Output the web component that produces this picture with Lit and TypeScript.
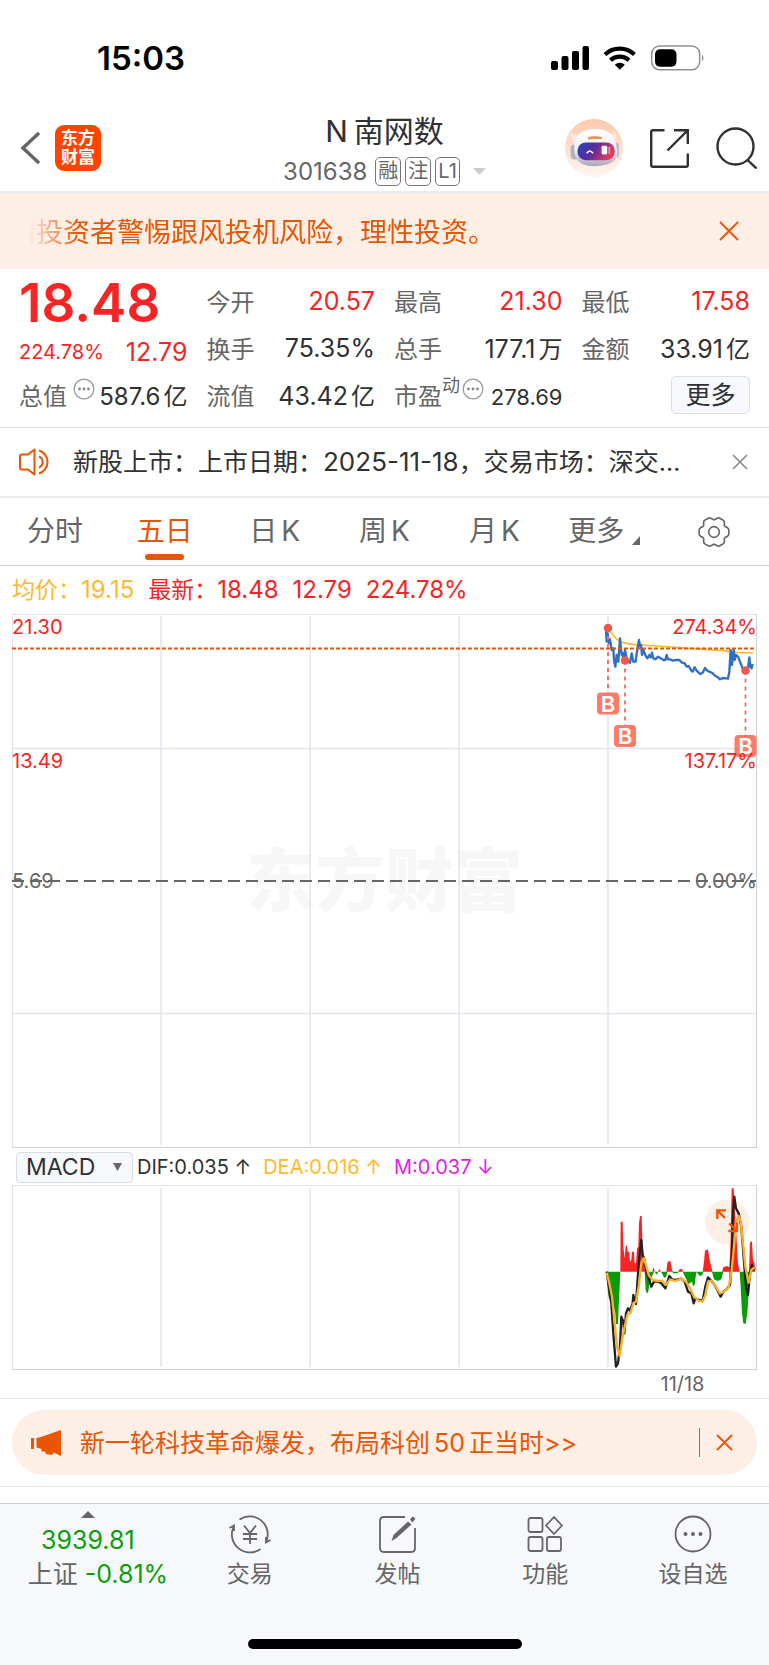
import { LitElement, html, svg, css } from "lit";
import { customElement, property } from "lit/decorators.js";

const base = css`
  :host { display: block; }
  * { box-sizing: border-box; }
  svg { display: block; }
  button, select { font: inherit; color: inherit; background: none; border: 0; padding: 0; margin: 0; cursor: pointer; }
`;

/** Outline of a six-lobed gear. */
function gearPath(): string {
  const pts: string[] = [];
  for (let i = 0; i < 96; i++) {
    const a = (i / 96) * Math.PI * 2;
    const r = 42 + 4 * Math.cos(6 * a) - 1.5 * Math.cos(12 * a);
    pts.push(`${(48 + r * Math.cos(a)).toFixed(1)},${(48 + r * Math.sin(a)).toFixed(1)}`);
  }
  return `M${pts.join("L")}Z`;
}

@customElement("status-bar")
class StatusBar extends LitElement {
  static styles = [base, css`
    .bar { display: flex; justify-content: space-between; align-items: center; padding: 38px 64px 0 97px; height: 78px; }
    .time { font-size: 33px; font-weight: 600; line-height: 40px; color: #000; }
  `];
  render() {
    return html`<div class="bar">
      <span class="time">15:03</span>
      <svg width="154" height="26" viewBox="0 0 154 26">
        <rect x="0" y="16" width="7" height="9" rx="2"/><rect x="10.500" y="11" width="7" height="14" rx="2"/>
        <rect x="21" y="6" width="7" height="19" rx="2"/><rect x="31.500" y="1" width="6.500" height="24" rx="2"/>
        <g fill="none" stroke="#000" stroke-width="4.200"><path d="M54 9.500a21.500 21.500 0 0 1 29.500 0"/><path d="M59.500 15.300a13.600 13.600 0 0 1 18.500 0"/></g>
        <path d="M68.800 24.800l-5-5a7.200 7.200 0 0 1 10 0z"/>
        <rect x="100.700" y="1" width="48" height="23.800" rx="8" fill="none" stroke="#8f8f8f" stroke-width="1.500"/>
        <rect x="104" y="4.200" width="21.500" height="17.600" rx="5"/><path d="M151 9.500q3 3.500 0 7z" fill="#8f8f8f"/>
      </svg></div>`;
  }
}

@customElement("stock-header")
class StockHeader extends LitElement {
  static styles = [base, css`
    .head { display: grid; grid-template-columns: minmax(0, 1fr) auto minmax(0, 1fr); align-items: center; padding: 31px 12px 5px; border-bottom: 2px solid #ebebed; }
    .left { display: flex; align-items: center; gap: 14px; margin-left: 8px; }
    .logo { display: grid; place-content: center; width: 46px; height: 46px; border-radius: 9px; background: #ff4400; color: #fff; font-size: 17px; line-height: 19px; font-weight: 700; text-align: center; text-decoration: none; }
    .logo span { display: block; }
    .mid { text-align: center; }
    h1 { margin: 0 0 4px; font-size: 30px; font-weight: 400; line-height: 44px; color: #2f3133; }
    h1 span { margin-left: 6px; }
    .sub { display: flex; align-items: center; justify-content: center; gap: 4px; font-size: 24px; line-height: 29px; color: #666; }
    .code { margin-right: 4px; }
    .tag { border: 1px solid #777; border-radius: 5px; height: 29px; line-height: 27px; padding: 0 2px; font-size: 20px; }
    .caret { margin-left: 9px; }
    .right { display: flex; align-items: center; justify-content: flex-end; gap: 26px; }
  `];
  render() {
    return html`<header class="head">
      <div class="left">
        <button aria-label="返回"><svg width="21" height="34" viewBox="0 0 21 34"><path d="M19 2L3 17l16 15" fill="none" stroke="#666" stroke-width="3.500"/></svg></button>
        <a class="logo" href="#"><span>东方</span><span>财富</span></a>
      </div>
      <div class="mid">
        <h1>N<span>南网数</span></h1>
        <div class="sub"><span class="code">301638</span><span class="tag">融</span><span class="tag">注</span><span class="tag">L1</span>
          <svg class="caret" width="13" height="8" viewBox="0 0 13 8"><path d="M0 0h13L6.500 7z" fill="#ccc"/></svg></div>
      </div>
      <div class="right">
        <button aria-label="智能助手"><svg width="58" height="58" viewBox="539 295 176 176">
          <defs>
            <linearGradient id="halo" x2="0" y2="1"><stop offset="0" stop-color="#fdc8ae"/><stop offset="1" stop-color="#fff6f1"/></linearGradient>
            <linearGradient id="visor" x2="1" y2=".3"><stop offset="0" stop-color="#2746b8"/><stop offset=".5" stop-color="#5a2c9c"/><stop offset="1" stop-color="#e23b5c"/></linearGradient>
            <linearGradient id="shell" x2="0" y2="1"><stop offset="0" stop-color="#fff"/><stop offset=".6" stop-color="#f0ecef"/><stop offset="1" stop-color="#a9a4b8"/></linearGradient>
          </defs>
          <circle cx="627" cy="383" r="88" fill="url(#halo)"/>
          <path d="M558 333q6 12 22 12l-8 26q-20-12-14-38zM690 331q-4 12-16 14l6 24q22-12 10-38z" fill="#f3e9e6"/>
          <rect x="556" y="372" width="26" height="46" rx="12" fill="#b5b0bd"/><rect x="683" y="366" width="20" height="46" rx="10" fill="#c3bbc6"/>
          <path d="M567 385q0-60 62-60t66 56q6 20-2 36-18 20-64 21-42 0-54-20-8-14-8-33z" fill="url(#shell)"/>
          <path d="M608 351q20-7 44 0l-2 5q-20-3-40 1z" fill="#ef8b3c"/>
          <rect x="577" y="366" width="113" height="54" rx="25" fill="url(#visor)"/>
          <path d="M605 399q9-14 19 0" fill="none" stroke="#fff" stroke-width="5"/>
          <rect x="650" y="376" width="17" height="27" rx="5" fill="#fff"/><rect x="671" y="379" width="5" height="22" rx="2" fill="#fff" opacity=".5"/>
        </svg></button>
        <button aria-label="分享"><svg width="40" height="40" viewBox="0 0 40 40" fill="none" stroke="#2f3133" stroke-width="2.400"><path d="M15.500 2.200H4Q2.200 2.200 2.200 4v33q0 1.800 1.800 1.800h33q1.800 0 1.800-1.800V25.500"/><path d="M25 2.200h13.800V16M38.500 2.500L18.500 22.500"/></svg></button>
        <button aria-label="搜索"><svg width="42" height="42" viewBox="0 0 42 42" fill="none" stroke="#2f3133" stroke-width="2.400"><circle cx="20.500" cy="19.500" r="18"/><path d="M32.500 33l9 8.500"/></svg></button>
      </div></header>`;
  }
}

@customElement("risk-banner")
class RiskBanner extends LitElement {
  static styles = [base, css`
    .banner { display: flex; align-items: center; justify-content: space-between; padding: 0 30px 0 28px; background: #fdeee6; color: #ea5504; }
    .text { flex: 1; padding-top: 4px; overflow: hidden; white-space: nowrap; text-indent: -19px; font-size: 27px; line-height: 72px; -webkit-mask-image: linear-gradient(90deg, transparent 1px, #000 50px); mask-image: linear-gradient(90deg, transparent 1px, #000 50px); }
  `];
  render() {
    return html`<div class="banner"><div class="text">请投资者警惕跟风投机风险，理性投资。</div>
      <button aria-label="关闭"><svg width="20" height="20" viewBox="0 0 20 20"><path d="M1 1l18 18M19 1L1 19" stroke="#ea5504" stroke-width="1.800"/></svg></button></div>`;
  }
}

const dots = svg`<circle cx="11" cy="11" r="9.800" fill="none" stroke="#999" stroke-width="1.300"/><g fill="#888"><circle cx="6.500" cy="11" r="1.400"/><circle cx="11" cy="11" r="1.400"/><circle cx="15.500" cy="11" r="1.400"/></g>`;

@customElement("quote-panel")
class QuotePanel extends LitElement {
  static styles = [base, css`
    .grid { display: grid; grid-template-columns: repeat(4, 1fr); grid-template-rows: repeat(3, 47px); column-gap: 19px; padding: 8px 19px 9px; border-bottom: 1px solid #e3e4e6; font-size: 25px; color: #2f3133; }
    .cell { display: flex; align-items: center; justify-content: space-between; white-space: nowrap; }
    .label { color: #666; display: flex; align-items: center; font-size: 24px; }
    .up { color: #f62424; }
    .price { font-size: 53px; font-weight: 600; padding-top: 4px; }
    .change { padding-top: 8px; }
    .pct { font-size: 20px; }
    .small { font-size: 24px; }
    .ratio { font-size: 22px; padding-top: 4px; }
    .unit { margin-left: 3px; font-size: 24px; }
    sup { font-size: 18px; line-height: 18px; align-self: flex-start; }
    .info { align-self: flex-start; margin: 1px 0 0 6px; }
    .tight .info { margin-left: 2px; }
    .more { width: 79px; height: 38px; margin-left: auto; border: 1px solid #dcdfe6; border-radius: 5px; background: #f6f8fb; line-height: 34px; }
  `];
  private cell(label: string, value: string, unit = "", up = false) {
    return html`<div class="cell"><span class="label">${label}</span><span class=${up ? "up" : ""}>${value}${unit ? html`<span class="unit">${unit}</span>` : ""}</span></div>`;
  }
  render() {
    const info = (name: string) => html`<button class="info" aria-label=${name}><svg width="22" height="22" viewBox="0 0 22 22">${dots}</svg></button>`;
    return html`<section class="grid">
      <div class="cell up price">18.48</div>
      ${this.cell("今开", "20.57", "", true)}${this.cell("最高", "21.30", "", true)}${this.cell("最低", "17.58", "", true)}
      <div class="cell up change"><span class="pct">224.78%</span><span>12.79</span></div>
      ${this.cell("换手", "75.35%")}${this.cell("总手", "177.1", "万")}${this.cell("金额", "33.91", "亿")}
      <div class="cell"><span class="label">总值${info("总值说明")}</span><span class="small">587.6<span class="unit">亿</span></span></div>
      ${this.cell("流值", "43.42", "亿")}
      <div class="cell tight"><span class="label">市盈<sup>动</sup>${info("市盈说明")}</span><span class="ratio">278.69</span></div>
      <div class="cell"><button class="more">更多</button></div>
    </section>`;
  }
}

@customElement("news-ticker")
class NewsTicker extends LitElement {
  static styles = [base, css`
    .row { display: flex; align-items: center; padding: 0 21px 0 19px; border-bottom: 2px solid #ededef; }
    .text { flex: 1; margin: 0 44px 0 20px; overflow: hidden; white-space: nowrap; text-overflow: ellipsis; font-size: 25px; line-height: 68px; color: #2f3133; text-decoration: none; }
    time { font-size: 26px; }
  `];
  render() {
    return html`<div class="row">
      <svg width="34" height="28" viewBox="0 0 34 28" fill="none" stroke="#ea5504" stroke-width="2"><path d="M15.500 1.500v25L9 21.500H3Q1 21.500 1 19.500v-11Q1 6.500 3 6.500h6zM20 2.500a12 12 0 0 1 0 23M20 8.500a6 6 0 0 1 0 11" stroke-linejoin="round"/></svg>
      <a class="text" href="#">新股上市：上市日期：<time>2025-11-18</time>，交易市场：深交所创业板</a>
      <button aria-label="关闭"><svg width="16" height="16" viewBox="0 0 16 16"><path d="M1 1l14 14M15 1L1 15" stroke="#888" stroke-width="1.600"/></svg></button></div>`;
  }
}

@customElement("period-tabs")
class PeriodTabs extends LitElement {
  static styles = [base, css`
    .tabs { display: grid; grid-template-columns: repeat(7, 1fr); border-bottom: 1px solid #ccd3da; font-size: 28px; line-height: 67px; color: #666; }
    .tab { position: relative; display: flex; align-items: center; justify-content: center; gap: 4px; white-space: nowrap; height: 67px; }
    .on { color: #ea5504; }
    .on::after { content: ""; position: absolute; left: calc(50% - 20px); bottom: 5px; width: 39px; height: 6px; border-radius: 3px; background: #ea5504; }
    .corner { align-self: flex-end; margin: 0 0 20px 4px; }
  `];
  @property() active = "五日";
  render() {
    return html`<nav class="tabs">
      ${["分时", "五日", "日 K", "周 K", "月 K"].map(t => html`<button class="tab ${t === this.active ? "on" : ""}" @click=${() => (this.active = t)}>${t.split(" ").map(p => html`<span>${p}</span>`)}</button>`)}
      <button class="tab">更多<svg class="corner" width="8" height="9" viewBox="0 0 8 9"><path d="M8 0v9H0z" fill="#666"/></svg></button>
      <button class="tab" aria-label="设置"><svg width="32" height="32" viewBox="0 0 96 96" fill="none" stroke="#666" stroke-width="5"><path d=${gearPath()}/><circle cx="48" cy="48" r="16"/></svg></button>
    </nav>`;
  }
}

const PRICE = "48,90 50,125 53,100 57,130 60,118 65,150 70,145 72,180 76,200 80,165 85,185 90,115 95,165 98,160 100,180 105,150 110,175 115,185 120,188 125,160 130,185 137,185 140,160 147,120 150,140 153,135 156,165 160,150 166,165 172,175 178,165 182,172 186,158 190,175 196,178 204,170 212,175 220,180 226,180 230,165 234,178 240,178 248,182 258,180 268,180 276,188 284,190 290,200 296,198 304,212 308,215 314,202 320,212 330,222 338,218 345,204 352,212 360,216 368,220 376,228 384,232 390,238 398,234 408,235 414,236 418,215 422,150 426,195 431,150 434,180 438,165 444,170 450,185 458,205 466,212 474,205 478,172 481,200 485,205 488,192";
const AVERAGE = "57,92 65,100 80,118 100,128 130,134 200,138 300,145 400,152 440,157 490,159";
const DIF = "50,275 58,330 64,370 70,460 78,560 84,550 90,500 94,410 100,425 103,460 108,400 114,385 120,392 128,370 130,345 138,372 142,310 148,230 154,180 158,225 162,235 168,270 176,295 184,320 192,305 204,305 214,310 226,325 238,288 246,298 258,300 274,296 284,305 294,335 304,340 311,370 316,355 326,360 338,362 346,320 354,292 362,300 372,312 382,330 392,350 400,335 410,328 420,315 426,220 429,100 433,50 438,85 446,100 454,140 460,220 468,320 474,345 480,280 486,255 490,270 495,262";
const DEA = "50,278 58,310 66,350 74,430 82,505 89,528 96,480 104,440 112,405 122,398 130,370 138,365 146,320 154,250 161,235 168,255 176,285 188,300 204,303 216,302 228,315 240,298 256,303 274,296 288,305 300,325 312,350 326,362 338,365 346,345 354,305 364,302 376,318 390,340 402,335 416,322 424,280 432,200 438,125 446,108 452,125 458,180 466,260 476,308 484,270 494,262";
const RED = "M91,275 92,125 98,125 100,200 104,235 107,197 111,197 113,215 118,215 120,245 124,240 126,215 132,215 134,250 138,250 141,205 145,200 147,130 150,108 155,108 157,175 160,235 163,262 166,275ZM187,275 189,265 192,264 194,275ZM204,275 208,267 213,275ZM229,275 232,250 236,243 241,243 246,270 250,275ZM264,275 269,267 276,267 280,275ZM338,275 342,245 345,212 354,208 358,235 364,262 368,275ZM396,275 400,262 410,258 418,262 422,180 425,25 431,25 434,80 440,180 444,250 449,275ZM477,275 480,185 486,185 489,240 494,250 495,275Z";
const GREEN = "M50,275 54,340 58,360 62,345 68,370 76,400 78,432 84,432 86,380 90,300 91,275ZM164,275 167,330 171,342 176,330 178,310 182,310 184,295 188,285 192,275ZM194,275 200,284 205,275ZM213,275 222,292 228,293 232,275ZM246,275 250,280 263,280 266,275ZM278,275 290,300 294,315 300,308 306,305 309,318 314,315 317,290 320,275ZM320,275 324,282 330,288 336,286 340,275ZM366,275 372,298 384,303 394,298 400,275ZM449,275 452,320 456,400 460,430 467,432 472,400 476,340 480,300 482,275Z";
const COLUMNS = [149, 298, 447, 596];

@customElement("price-chart")
class PriceChart extends LitElement {
  static styles = [base, css`
    .legend { display: flex; gap: 14px; padding: 0 12px; font-size: 24px; line-height: 48px; color: #f62424; white-space: nowrap; }
    .cjk { font-size: 23px; }
    .avg { color: #ffb92e; }
    .plot { position: relative; margin: 0 12px; }
    .plot svg { width: 100%; height: auto; position: relative; }
    .mark { position: absolute; inset: 0; display: grid; place-content: center; color: #f7f7f7; font-weight: 900; font-size: 69px; line-height: 70px; }
    .axis { position: absolute; inset: 0; display: flex; flex-direction: column; font-size: 20px; line-height: 26px; color: #f62424; }
    .tick { display: flex; justify-content: space-between; height: 25%; }
    .zero { color: #666; }
    .zero span { margin-top: -13px; height: 26px; }
    .b { font-size: 22px; font-weight: 600; fill: #fff; }
  `];
  private flag(x: number, y: number, to: number) {
    return svg`<path d=${`M${x} ${y}V${to - 11}`} stroke="#fb6a59" stroke-width="1.800" stroke-dasharray="4 4"/>
      <circle cx=${x} cy=${y} r="4.300" fill="#e9594f"/><rect x=${x - 11} y=${to - 11} width="22" height="22" rx="4" fill="#ff7a68"/>
      <text class="b" x=${x} y=${to + 8} text-anchor="middle">B</text>`;
  }
  render() {
    return html`
      <div class="legend"><span class="avg"><span class="cjk">均价：</span>19.15</span><span><span class="cjk">最新：</span>18.48</span><span>12.79</span><span>224.78%</span></div>
      <div class="plot">
        <div class="mark">东方财富</div>
        <svg viewBox="0 0 745 534">
          <path d="M.5 534V.5H744" fill="none" stroke="#dfe2e8"/>
          <path d="M744.500 0V534M0 533.500H745" fill="none" stroke="#ccd0d8"/>
          <g stroke="#e2e5ec" stroke-width="1.500"><path d="M1 134.500H744M1 399.500H744"/>${COLUMNS.map(x => svg`<path d=${`M${x} 2V531`}/>`)}</g>
          <path d="M0 267H744" stroke="#666" stroke-width="2" stroke-dasharray="12 6"/>
          <g transform="translate(578 -14) scale(.3333)" fill="none" stroke-linejoin="round">
            <polyline points=${AVERAGE} stroke="#ffb92e" stroke-width="5"/><polyline points=${PRICE} stroke="#2f6fc4" stroke-width="7"/>
          </g>
          <path d="M0 34.500H744" stroke="#ea5504" stroke-width="1.800" stroke-dasharray="4 2"/>
          ${this.flag(596, 14, 89.5)}${this.flag(613, 46.5, 122)}${this.flag(733.5, 56.5, 132)}
        </svg>
        <div class="axis">
          <div class="tick"><span>21.30</span><span>274.34%</span></div>
          <div class="tick"><span>13.49</span><span>137.17%</span></div>
          <div class="tick zero"><span>5.69</span><span>0.00%</span></div>
        </div>
      </div>`;
  }
}

@customElement("macd-chart")
class MacdChart extends LitElement {
  static styles = [base, css`
    .bar { display: flex; align-items: center; gap: 12px; height: 37px; padding: 1px 16px 0; font-size: 20px; color: #2f3133; white-space: nowrap; }
    .pick { position: relative; display: flex; align-items: center; margin-right: -8px; }
    .pick select { appearance: none; width: 117px; height: 31px; padding: 0 28px 0 9px; border: 1px solid #d8dce3; border-radius: 4px; background: #f6f8fb; font-size: 23px; line-height: 27px; }
    .pick svg { position: absolute; right: 11px; pointer-events: none; }
    .dea { color: #ffb92e; }
    .m { color: #e01fe0; }
    .plot { position: relative; margin: 0 12px; }
    .plot > svg { width: 100%; height: auto; }
    .expand { position: absolute; left: 93%; top: 7%; width: 6%; }
    .expand svg { width: 100%; height: auto; }
    .dates { display: grid; grid-template-columns: repeat(5, 1fr); margin: 0 12px; font-size: 20px; line-height: 28px; color: #666; text-align: center; }
    .last { grid-column: 5; }
  `];
  render() {
    return html`
      <div class="bar">
        <label class="pick"><select aria-label="指标"><option>MACD</option><option>KDJ</option></select>
          <svg width="9" height="8" viewBox="0 0 9 8"><path d="M0 0h9L4.500 8z" fill="#666"/></svg></label>
        <span>DIF:0.035 ↑</span><span class="dea">DEA:0.016 ↑</span><span class="m">M:0.037 ↓</span>
      </div>
      <div class="plot">
        <svg viewBox="0 0 745 185">
          <path d="M.5 185V.5H744" fill="none" stroke="#dfe2e8"/><path d="M744.500 0V185M0 184.500H745" fill="none" stroke="#ccd0d8"/>
          <g stroke="#e2e5ec" stroke-width="1.500">${COLUMNS.map(x => svg`<path d=${`M${x} 3V182`}/>`)}</g>
          <g transform="translate(578 -5) scale(.3333)" fill="none" stroke-linejoin="round">
            <circle cx="412" cy="126" r="67" fill="#fdeee6"/>
            <path d=${RED} fill="#f62424"/><path d=${GREEN} fill="#0a9b0a"/>
            <polyline points=${DIF} stroke="#222" stroke-width="7"/><polyline points=${DEA} stroke="#f9ae2d" stroke-width="7"/>
          </g>
        </svg>
        <button class="expand" aria-label="全屏"><svg viewBox="345 59 134 134" fill="none" stroke="#ea5504" stroke-width="7"><path d="M408 96H382V122M383 97L405 119M415 158H441V132M440 157L418 135"/></svg></button>
      </div>
      <div class="dates"><span class="last">11/18</span></div>`;
  }
}

@customElement("promo-strip")
class PromoStrip extends LitElement {
  static styles = [base, css`
    .wrap { padding: 11px 12px; border-top: 1px solid #e3e4e6; border-bottom: 1px solid #e3e4e6; margin-bottom: 16px; }
    .pill { display: flex; align-items: center; height: 65px; padding: 0 24px 0 19px; border-radius: 33px; background: #fdeee6; color: #ea5504; font-size: 25px; }
    .text { flex: 1; margin-left: 18px; padding-bottom: 3px; color: inherit; text-decoration: none; white-space: nowrap; }
    .num { margin: 0 4px; }
    .rule { width: 1px; height: 29px; margin-right: 16px; background: #ea5504; }
  `];
  render() {
    return html`<div class="wrap"><div class="pill">
      <svg width="31" height="26" viewBox="0 0 31 26" fill="#ea5504"><path d="M0 8h3v11H0zM5.500 8L10 7 30 0v26l-7-3.500-2 2.500-6-1-1-2.500h-3.500V19L5.500 17.500z"/></svg>
      <a class="text" href="#">新一轮科技革命爆发，布局科创<span class="num">50</span>正当时&gt;&gt;</a><span class="rule"></span>
      <button aria-label="关闭"><svg width="17" height="17" viewBox="0 0 17 17"><path d="M1 1l15 15M16 1L1 16" stroke="#ea5504" stroke-width="1.800"/></svg></button>
    </div></div>`;
  }
}

@customElement("bottom-nav")
class BottomNav extends LitElement {
  static styles = [base, css`
    :host { flex: 1; background: #f6f8fb; border-top: 1px solid #ccd0d8; }
    .nav { display: grid; grid-template-columns: 176fr repeat(4, 148fr); font-size: 23px; line-height: 32px; color: #666; padding: 7px 2px 0 0; }
    .item { display: flex; flex-direction: column; align-items: center; gap: 4px; padding-top: 3px; white-space: nowrap; }
    .index { display: flex; flex-direction: column; align-items: center; padding-left: 20px; font-size: 25px; }
    .value { line-height: 34px; color: #0a9f0a; }
    .index > .value { margin: 5px 0 0 -20px; }
    .arrow { margin-left: -20px; }
    .home { width: 274px; height: 10px; margin: 48px auto 16px; border-radius: 5px; background: #000; }
  `];
  render() {
    const icon = (body: unknown) => html`<svg width="42" height="40" viewBox="0 0 42 40" fill="none" stroke="#666" stroke-width="1.800">${body}</svg>`;
    const items: [string, unknown][] = [
      ["交易", svg`<path d="M10.500 5.500A18 18 0 0 1 37 28M31.500 35A18 18 0 0 1 4.500 13M.5 14l4.500-2.500V17M41.500 26L37 28.500V23"/><path d="M15 11.500l6 7.500 6-7.500M14 20h14M14 25h14M21 19v11"/>`],
      ["发帖", svg`<path d="M29 3H8Q4 3 4 7v27q0 4 4 4h27q4 0 4-4V14"/><path d="M15.500 27l2-6L32 7.500l3.500 3L20.500 24zM34 5.500l2.500-3 3 2-3 4z" fill="#666" stroke="none"/>`],
      ["功能", svg`<rect x="4.500" y="4" width="14" height="14" rx="2"/><rect x="4.500" y="23" width="14" height="14" rx="2"/><rect x="23" y="23" width="14" height="14" rx="2"/><path d="M30 3l8 8.500-8 8.500-8-8.500z" stroke-linejoin="round"/>`],
      ["设自选", svg`<circle cx="21" cy="20" r="17.500"/><g fill="#666" stroke="none"><circle cx="13.500" cy="20" r="2"/><circle cx="21" cy="20" r="2"/><circle cx="28.500" cy="20" r="2"/></g>`],
    ];
    return html`<nav class="nav">
      <button class="index"><svg class="arrow" width="14" height="7" viewBox="0 0 14 7"><path d="M7 0l7 7H0z" fill="#666"/></svg>
        <span class="value">3939.81</span><span>上证 <span class="value">-0.81%</span></span></button>
      ${items.map(([label, body]) => html`<button class="item">${icon(body)}<span>${label}</span></button>`)}
    </nav><div class="home"></div>`;
  }
}

@customElement("app-root")
class AppRoot extends LitElement {
  static styles = css`
    :host { display: flex; flex-direction: column; min-height: 100vh; background: #fff; font-family: Inter, "Noto Sans CJK SC", sans-serif; overflow: hidden; }
  `;
  render() {
    return html`<status-bar></status-bar><stock-header></stock-header><risk-banner></risk-banner><quote-panel></quote-panel>
      <news-ticker></news-ticker><period-tabs></period-tabs><price-chart></price-chart><macd-chart></macd-chart>
      <promo-strip></promo-strip><bottom-nav></bottom-nav>`;
  }
}
